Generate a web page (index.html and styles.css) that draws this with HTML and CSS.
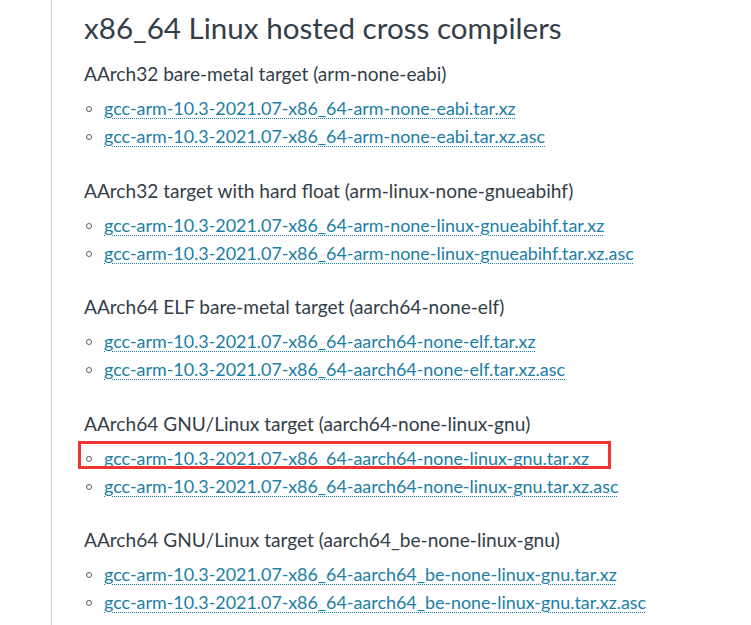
FILE: index.html
```html
<!DOCTYPE html>
<html lang="en">
<head>
<meta charset="utf-8">
<link rel="stylesheet" href="styles.css">
<title>x86_64 Linux hosted cross compilers</title>
</head>
<body>
<div class="page">
  <h2 class="title">x86_64 Linux hosted cross compilers</h2>

  <section class="group">
    <p class="target">AArch32 bare-metal target (arm-none-eabi)</p>
    <ul class="files">
      <li><a href="#">gcc-arm-10.3-2021.07-x86_64-arm-none-eabi.tar.xz</a></li>
      <li><a href="#">gcc-arm-10.3-2021.07-x86_64-arm-none-eabi.tar.xz.asc</a></li>
    </ul>
  </section>

  <section class="group">
    <p class="target">AArch32 target with hard float (arm-linux-none-gnueabihf)</p>
    <ul class="files">
      <li><a href="#">gcc-arm-10.3-2021.07-x86_64-arm-none-linux-gnueabihf.tar.xz</a></li>
      <li><a href="#">gcc-arm-10.3-2021.07-x86_64-arm-none-linux-gnueabihf.tar.xz.asc</a></li>
    </ul>
  </section>

  <section class="group">
    <p class="target">AArch64 ELF bare-metal target (aarch64-none-elf)</p>
    <ul class="files">
      <li><a href="#">gcc-arm-10.3-2021.07-x86_64-aarch64-none-elf.tar.xz</a></li>
      <li><a href="#">gcc-arm-10.3-2021.07-x86_64-aarch64-none-elf.tar.xz.asc</a></li>
    </ul>
  </section>

  <section class="group">
    <p class="target">AArch64 GNU/Linux target (aarch64-none-linux-gnu)</p>
    <ul class="files">
      <li class="highlight"><a href="#">gcc-arm-10.3-2021.07-x86_64-aarch64-none-linux-gnu.tar.xz</a></li>
      <li><a href="#">gcc-arm-10.3-2021.07-x86_64-aarch64-none-linux-gnu.tar.xz.asc</a></li>
    </ul>
  </section>

  <section class="group">
    <p class="target">AArch64 GNU/Linux target (aarch64_be-none-linux-gnu)</p>
    <ul class="files">
      <li><a href="#">gcc-arm-10.3-2021.07-x86_64-aarch64_be-none-linux-gnu.tar.xz</a></li>
      <li><a href="#">gcc-arm-10.3-2021.07-x86_64-aarch64_be-none-linux-gnu.tar.xz.asc</a></li>
    </ul>
  </section>
</div>
</body>
</html>
```

FILE: styles.css
```css
html, body {
  margin: 0;
  padding: 0;
  background: #ffffff;
}

body {
  font-family: Lato, "Open Sans", "Liberation Sans", sans-serif;
  color: #333e48;
  overflow: hidden;
  height: 625px;
}

.page {
  margin-left: 51px;
  border-left: 1px solid #cfcfcf;
  padding: 9px 0 0 32px;
  min-height: 640px;
}

.title {
  margin: 0 0 15px;
  font-size: 29.6px;
  font-weight: 400;
  line-height: 38px;
  color: #333e48;
}

.group {
  margin-bottom: 28.5px;
}

.target {
  margin: 0 0 8px;
  font-size: 19.1px;
  line-height: 24px;
}

.files {
  list-style: none;
  margin: 0;
  padding: 0;
}

.files li {
  position: relative;
  padding-left: 20px;
  font-size: 17.9px;
  line-height: 28px;
}

.files li::before {
  content: "";
  position: absolute;
  left: 2px;
  top: 12px;
  width: 4px;
  height: 4px;
  border: 1.5px solid #555d66;
  border-radius: 50%;
}

.files a {
  color: #1b7ea6;
  text-decoration: underline dotted;
  text-decoration-color: #1b7ea6;
  text-decoration-thickness: 1px;
  text-underline-offset: 3px;
}

.files li.highlight::after {
  content: "";
  position: absolute;
  left: -6px;
  top: -3px;
  width: 527px;
  height: 22px;
  border: 3px solid #ef3434;
  pointer-events: none;
}
```
